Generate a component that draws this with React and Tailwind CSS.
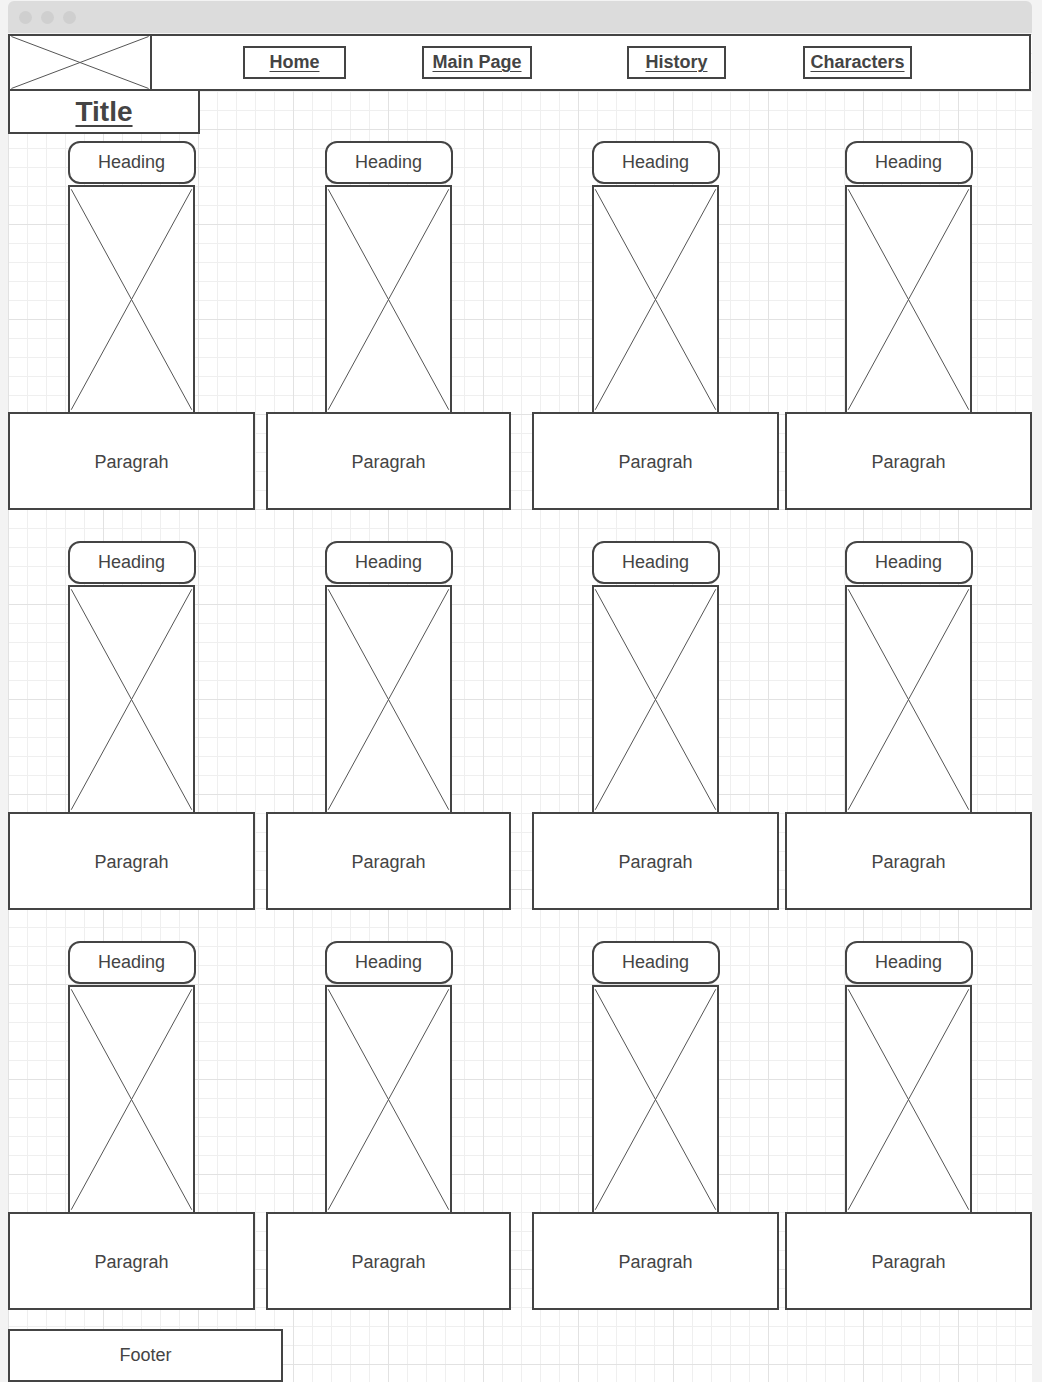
const navItems = [
  { label: 'Home', cls: 'ml-[91px] w-[103px]' },
  { label: 'Main Page', cls: 'ml-[76px] w-[110px]' },
  { label: 'History', cls: 'ml-[95px] w-[99px]' },
  { label: 'Characters', cls: 'ml-[77px] w-[109px]' },
];

// paragraph widths per column
const cols = ['w-[247px]', 'w-[245px]', 'w-[247px]', 'w-[247px]'];

function Cross() {
  return (
    <svg className="absolute inset-0 w-full h-full" viewBox="0 0 100 100" preserveAspectRatio="none">
      <line x1="1" y1="1" x2="99" y2="99" stroke="#555" strokeWidth="1" vectorEffect="non-scaling-stroke" />
      <line x1="99" y1="1" x2="1" y2="99" stroke="#555" strokeWidth="1" vectorEffect="non-scaling-stroke" />
    </svg>
  );
}

function Card({ width }) {
  return (
    <div className={`flex flex-col items-center ${width}`}>
      <div className="w-[128px] h-[43px] rounded-[12px] border-2 border-[#444] bg-white flex items-center justify-center text-[18px] text-[#444]">
        Heading
      </div>
      <div className="relative w-[127px] h-[229px] mt-[1px] border-2 border-[#444] bg-white">
        <Cross />
      </div>
      <div className="w-full h-[98px] -mt-[2px] border-2 border-[#444] bg-white flex items-center justify-center pt-[2px] text-[18px] text-[#444]">
        Paragrah
      </div>
    </div>
  );
}

export default function App() {
  return (
    <div className="w-[1042px] h-[1382px] overflow-hidden bg-[#f3f3f3] pl-[8px] pt-[1px] font-['Liberation_Sans',Arial,sans-serif]">
      <div className="w-[1024px]">
        {/* barre de titre */}
        <div className="h-[32px] rounded-t-[6px] bg-[#dcdcdc] flex items-center gap-[9px] pl-[11px]">
          <span className="w-[13px] h-[13px] rounded-full bg-[#cfcfcf]" />
          <span className="w-[13px] h-[13px] rounded-full bg-[#cfcfcf]" />
          <span className="w-[13px] h-[13px] rounded-full bg-[#cfcfcf]" />
        </div>

        {/* page */}
        <div className="h-[1349px] bg-white [background-image:linear-gradient(to_right,#e2e2e2_1px,transparent_1px),linear-gradient(to_bottom,#e2e2e2_1px,transparent_1px),linear-gradient(to_right,#efefef_1px,transparent_1px),linear-gradient(to_bottom,#efefef_1px,transparent_1px)] [background-size:95px_95px,95px_95px,19px_19px,19px_19px]">
          <header className="mt-[1px] w-[1023px] h-[57px] border-2 border-[#444] bg-white flex items-center">
            <div className="relative w-[142px] h-full border-r-2 border-[#444]">
              <Cross />
            </div>
            {navItems.map(item => (
              <a key={item.label} href="#"
                className={`h-[33px] border-2 border-[#444] flex items-center justify-center text-[18px] font-bold text-[#444] underline underline-offset-[3px] ${item.cls}`}>
                {item.label}
              </a>
            ))}
          </header>

          <div className="-mt-[2px] w-[192px] h-[45px] border-2 border-[#444] bg-white flex items-center justify-center">
            <h1 className="text-[28px] font-bold text-[#444] underline underline-offset-[4px]">Title</h1>
          </div>

          <div className="mt-[7px] grid grid-cols-[258px_266px_253px_246px] gap-y-[31px]">
            {Array.from({ length: 12 }).map((_, i) => (
              <Card key={i} width={cols[i % 4]} />
            ))}
          </div>

          <footer className="mt-[19px] w-[275px] h-[53px] border-2 border-[#444] bg-white flex items-center justify-center text-[18px] text-[#444]">
            Footer
          </footer>
        </div>
      </div>
    </div>
  );
}
